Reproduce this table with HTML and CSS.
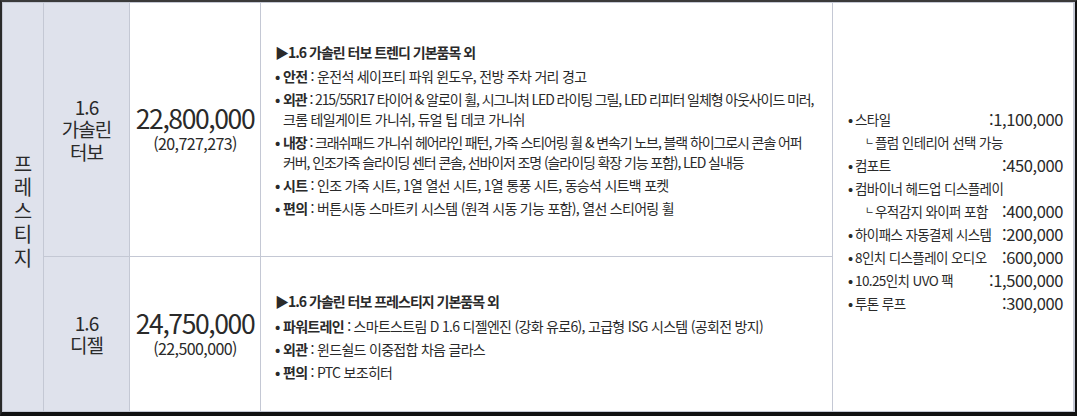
FILE: index.html
```html
<!DOCTYPE html>
<html lang="ko">
<head>
<meta charset="utf-8">
<title>프레스티지</title>
<link rel="stylesheet" href="styles.css">
</head>
<body>
<div class="frame">
  <div class="grid">
    <div class="cell trim">프<br>레<br>스<br>티<br>지</div>

    <div class="cell engine">1.6<br>가솔린<br>터보</div>
    <div class="cell price">
      <div class="big">22,800,000</div>
      <div class="sub">(20,727,273)</div>
    </div>
    <div class="cell specs">
      <div class="head">▶1.6 가솔린 터보 트렌디 기본품목 외</div>
      <ul class="list">
        <li><b>안전</b> : 운전석 세이프티 파워 윈도우, 전방 주차 거리 경고</li>
        <li><span class="tight"><b>외관</b> : 215/55R17 타이어 &amp; 알로이 휠, 시그니처 LED 라이팅 그릴, LED 리피터 일체형 아웃사이드 미러,</span><br>크롬 테일게이트 가니쉬, 듀얼 팁 데코 가니쉬</li>
        <li class="tight"><b>내장</b> : 크래쉬패드 가니쉬 헤어라인 패턴, 가죽 스티어링 휠 &amp; 변속기 노브, 블랙 하이그로시 콘솔 어퍼<br>커버, 인조가죽 슬라이딩 센터 콘솔, 선바이저 조명 (슬라이딩 확장 기능 포함), LED 실내등</li>
        <li><b>시트</b> : 인조 가죽 시트, 1열 열선 시트, 1열 통풍 시트, 동승석 시트백 포켓</li>
        <li><b>편의</b> : 버튼시동 스마트키 시스템 (원격 시동 기능 포함), 열선 스티어링 휠</li>
      </ul>
    </div>
    <div class="cell options">
      <ul class="opts">
        <li><span class="lbl">스타일</span><span class="amt">:1,100,000</span></li>
        <li class="subopt"><span class="lbl">플럼 인테리어 선택 가능</span></li>
        <li><span class="lbl">컴포트</span><span class="amt">:450,000</span></li>
        <li><span class="lbl">컴바이너 헤드업 디스플레이</span></li>
        <li class="subopt"><span class="lbl">우적감지 와이퍼 포함</span><span class="amt">:400,000</span></li>
        <li><span class="lbl">하이패스 자동결제 시스템</span><span class="amt">:200,000</span></li>
        <li><span class="lbl">8인치 디스플레이 오디오</span><span class="amt">:600,000</span></li>
        <li><span class="lbl">10.25인치 UVO 팩</span><span class="amt">:1,500,000</span></li>
        <li><span class="lbl">투톤 루프</span><span class="amt">:300,000</span></li>
      </ul>
    </div>

    <div class="cell engine">1.6<br>디젤</div>
    <div class="cell price">
      <div class="big">24,750,000</div>
      <div class="sub">(22,500,000)</div>
    </div>
    <div class="cell specs specs2">
      <div class="head">▶1.6 가솔린 터보 프레스티지 기본품목 외</div>
      <ul class="list">
        <li><b>파워트레인</b> : 스마트스트림 D 1.6 디젤엔진 (강화 유로6), 고급형 ISG 시스템 (공회전 방지)</li>
        <li><b>외관</b> : 윈드쉴드 이중접합 차음 글라스</li>
        <li><b>편의</b> : PTC 보조히터</li>
      </ul>
    </div>
  </div>
</div>
</body>
</html>
```

FILE: styles.css
```css
html, body {
  margin: 0;
  padding: 0;
  background: #ffffff;
}

body {
  font-family: "Noto Sans CJK KR", "Noto Sans", sans-serif;
  color: #2a2a2a;
}

.frame {
  width: 1077px;
  height: 416px;
  box-sizing: border-box;
  border-left: 2px solid #2a2a2a;
  border-top: 2px solid #3a3a3a;
  border-right: 2px solid #111111;
  border-bottom: 4px solid #111111;
  background: #ffffff;
}

.grid {
  height: 100%;
  box-sizing: border-box;
  display: grid;
  grid-template-columns: 40px 85px 130px 571px 240px;
  grid-template-rows: 253px 1fr;
  gap: 1px;
  padding: 1px;
  background: #c4c8d4;
}

.cell {
  background: #ffffff;
  display: flex;
  flex-direction: column;
  justify-content: center;
}

.trim {
  grid-row: 1 / span 2;
  background: #dfe2ec;
  align-items: center;
  text-align: center;
  font-size: 20px;
  line-height: 23.5px;
  padding-top: 7px;
}

.engine {
  background: #dfe2ec;
  align-items: center;
  text-align: center;
  font-size: 19px;
  line-height: 22.5px;
  letter-spacing: -1px;
}

.price {
  align-items: center;
  text-align: center;
}

.price .big {
  font-size: 26.5px;
  line-height: 28px;
  letter-spacing: -1.4px;
  margin-top: -2px;
}

.price .sub {
  font-size: 16px;
  line-height: 20px;
  letter-spacing: -0.6px;
  margin-top: 1px;
}

.specs {
  padding-left: 14px;
  font-size: 14px;
  letter-spacing: -0.7px;
}

.specs .head {
  font-weight: bold;
  line-height: 20px;
  margin-bottom: 4px;
  letter-spacing: -1px;
}

.list {
  list-style: none;
  margin: 0;
  padding: 0;
}

.list li {
  position: relative;
  padding-left: 8px;
  line-height: 20px;
  white-space: nowrap;
  margin-bottom: 3px;
}

.list li:last-child {
  margin-bottom: 0;
}

.list .tight {
  letter-spacing: -1.1px;
}

.list li::before,
.opts li::before {
  content: "•";
  position: absolute;
  left: 0;
  top: 0;
  font-weight: bold;
  letter-spacing: 0;
}

.list b {
  font-weight: bold;
}

.specs2 {
  padding-top: 4px;
}

.specs2 .head {
  margin-bottom: 5px;
}

.options {
  grid-column: 5;
  grid-row: 1 / span 2;
  padding: 8px 10px 0 15px;
}

.opts {
  list-style: none;
  margin: 0;
  padding: 0;
}

.opts li {
  position: relative;
  display: flex;
  justify-content: space-between;
  align-items: center;
  height: 23px;
  padding-left: 7px;
  line-height: 23px;
  font-size: 13.5px;
  letter-spacing: -0.6px;
  white-space: nowrap;
}

.opts li.subopt {
  padding-left: 27px;
}

.opts li.subopt::before {
  content: "ㄴ";
  left: 17px;
  font-size: 10px;
  font-weight: normal;
  top: -2px;
}

.opts .amt {
  font-size: 16.5px;
  letter-spacing: -0.4px;
}
```
